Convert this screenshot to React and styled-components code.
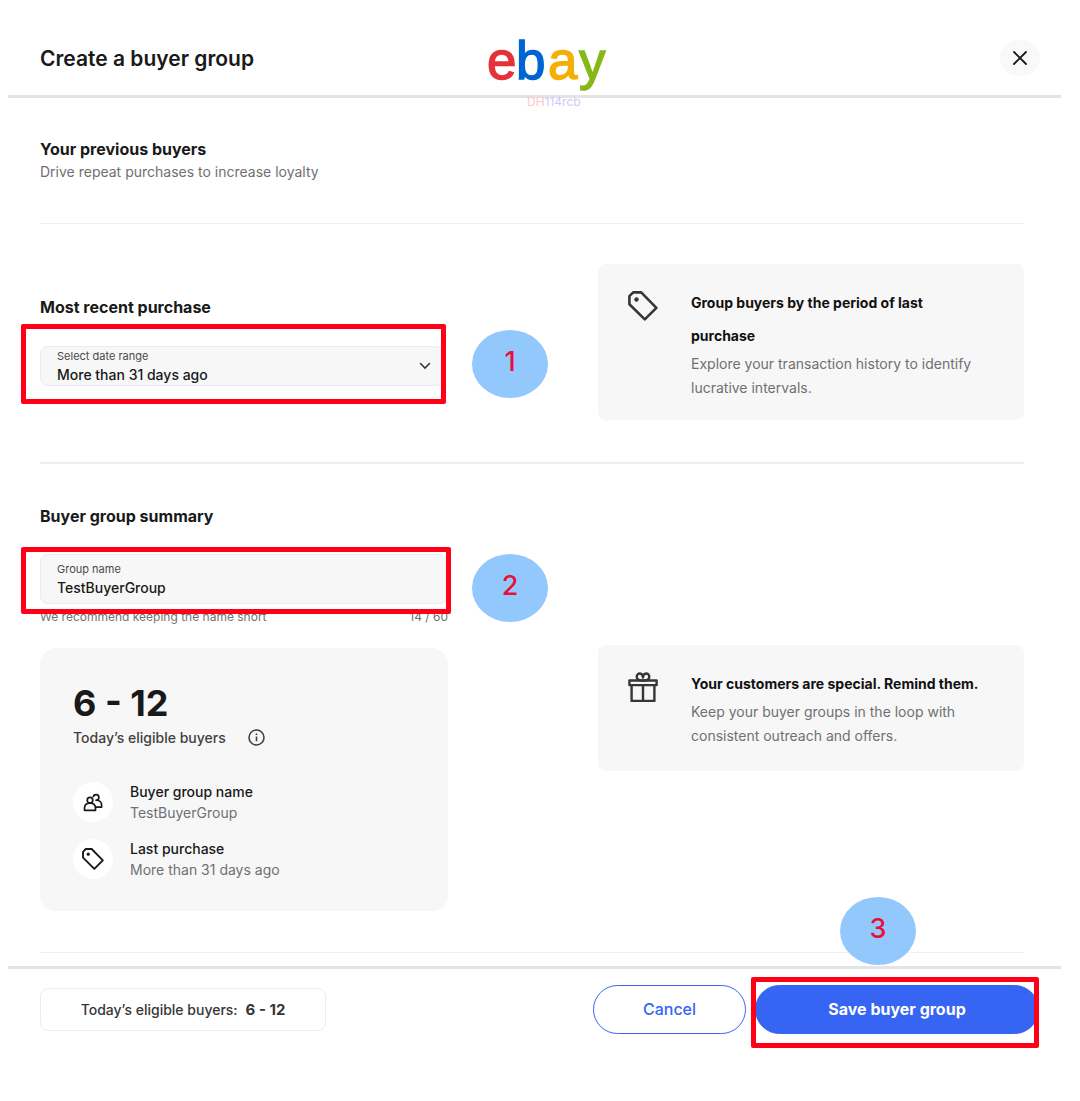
import React from "react";
import styled, { createGlobalStyle } from "styled-components";

const ink = "#191919";
const muted = "#707070";
const surface = "#f7f7f7";
const red = "#ff0018";
const blue = "#3665f3";

const GlobalStyle = createGlobalStyle`
  *, *::before, *::after { box-sizing: border-box; }
  body {
    margin: 0;
    background: #fff;
    color: ${ink};
    font-family: Inter, "Liberation Sans", sans-serif;
    font-size: 14px;
    line-height: 21px;
  }
  h1, h2, h3, p, dl, dt, dd { margin: 0; }
  button, input, select { font: inherit; }
`;

const Page = styled.div`
  padding: 20px 19px 40px 8px;
`;

const Header = styled.header`
  display: grid;
  grid-template-columns: 1fr auto 1fr;
  align-items: center;
  height: 78px;
  padding: 0 21px 0 32px;
  border-bottom: 3px solid #e3e3e3;
`;

const Title = styled.h1`
  padding-top: 2px;
  font-size: 21px;
  line-height: 28px;
  font-weight: 600;
`;

const Brand = styled.div`
  position: relative;
  display: flex;
  margin-left: 16px;
`;

const Tag = styled.span`
  position: absolute;
  top: 71px;
  left: 41px;
  font-size: 12px;
  line-height: 12px;
  color: #cfc9fa;
`;

const TagLead = styled.span`
  color: #ffc6cd;
`;

const CloseButton = styled.button`
  display: grid;
  place-items: center;
  justify-self: end;
  width: 40px;
  height: 36px;
  padding: 0;
  border: 0;
  border-radius: 18px;
  background: #f9f9f9;
  color: ${ink};
`;

const Content = styled.main`
  padding: 0 37px 0 32px;
`;

const Section = styled.section`
  padding: ${(p) => p.$pad};
  border-bottom: ${(p) => p.$line || 1}px solid #efefef;
`;

const Columns = styled.div`
  display: grid;
  grid-template-columns: 408fr 426fr;
  column-gap: 150px;
  align-items: start;
`;

const Column = styled.div`
  padding-top: ${(p) => p.$top || 0}px;
`;

const Heading = styled.h2`
  font-size: 16px;
  line-height: 24px;
  font-weight: 700;
`;

const Muted = styled.p`
  color: ${muted};
`;

const Marked = styled.div`
  position: relative;
  margin-top: ${(p) => p.$top || 0}px;
`;

const Outline = styled.div`
  position: absolute;
  inset: ${(p) => p.$inset};
  border: 5px solid ${red};
  border-radius: 2px;
  pointer-events: none;
`;

const Step = styled.span`
  position: absolute;
  top: ${(p) => p.$top}px;
  left: ${(p) => p.$left};
  display: grid;
  place-items: center;
  width: 76px;
  height: 68px;
  padding-bottom: 4px;
  border-radius: 50%;
  background: #93c8fd;
  color: #e8103a;
  font-size: 27px;
  line-height: 32px;
  font-weight: 500;
`;

const Field = styled.div`
  position: relative;
  display: flex;
  flex-direction: column;
  justify-content: center;
  height: ${(p) => p.$height}px;
  margin-right: ${(p) => p.$end || 0}px;
  padding: 0 16px;
  border: 1px solid #ececec;
  border-radius: 8px;
  background: ${surface};
`;

const FieldLabel = styled.label`
  font-size: 11px;
  line-height: 16px;
  color: #4a4a4a;
`;

const Select = styled.select`
  appearance: none;
  width: 100%;
  height: 20px;
  padding: 0;
  border: 0;
  background: transparent;
  color: ${ink};
  font-weight: 500;
`;

const TextInput = styled.input`
  width: 100%;
  height: 20px;
  padding: 0;
  border: 0;
  background: transparent;
  color: ${ink};
  font-weight: 500;
`;

const Chevron = styled.svg`
  position: absolute;
  top: 15px;
  right: 12px;
  pointer-events: none;
`;

const Hint = styled.p`
  display: flex;
  justify-content: space-between;
  padding-top: 5px;
  font-size: 12px;
  line-height: 16px;
  color: ${muted};
`;

const Tip = styled.aside`
  display: flex;
  gap: 33px;
  min-height: ${(p) => p.$height}px;
  padding: 22px 37px 16px 30px;
  border-radius: 8px;
  background: ${surface};
  color: #363636;

  svg {
    flex: none;
    margin-top: 5px;
  }
`;

const TipTitle = styled.h3`
  font-size: 14px;
  line-height: 33px;
  font-weight: 700;
  color: #111;
`;

const TipText = styled.p`
  line-height: 24px;
  color: ${muted};
`;

const Summary = styled.div`
  margin-top: 23px;
  padding: 33px 33px 31px;
  border-radius: 16px;
  background: ${surface};
`;

const Count = styled.p`
  font-size: 36px;
  line-height: 44px;
  font-weight: 700;
`;

const Eligible = styled.p`
  display: flex;
  align-items: center;
  gap: 22px;
  margin-top: 2px;
  color: #414141;
  font-weight: 500;
`;

const Facts = styled.dl`
  display: grid;
  gap: 15px;
  margin-top: 33px;
`;

const Fact = styled.div`
  display: grid;
  grid-template-columns: 40px 1fr;
  align-items: center;
  column-gap: 17px;
`;

const Badge = styled.span`
  display: grid;
  place-items: center;
  grid-row: span 2;
  width: 40px;
  height: 40px;
  border-radius: 50%;
  background: #fff;
`;

const FactName = styled.dt`
  font-weight: 500;
`;

const FactValue = styled.dd`
  color: ${muted};
`;

const Footer = styled.footer`
  display: flex;
  align-items: center;
  gap: 9px;
  margin-top: 13px;
  padding: 16px 22px 16px 32px;
  border-top: 3px solid #e3e3e3;
`;

const Pill = styled.div`
  display: flex;
  justify-content: center;
  gap: 8px;
  width: 286px;
  margin-right: auto;
  padding: 10px 0;
  border: 1px solid #ececec;
  border-radius: 8px;
  color: #363636;
  font-weight: 500;
`;

const Total = styled.strong`
  font-size: 15px;
  font-weight: 700;
`;

const Button = styled.button`
  width: ${(p) => (p.$primary ? 284 : 153)}px;
  height: 49px;
  border: 1px solid ${blue};
  border-radius: 25px;
  background: ${(p) => (p.$primary ? blue : "#fff")};
  color: ${(p) => (p.$primary ? "#fff" : blue)};
  font-size: 16px;
  font-weight: ${(p) => (p.$primary ? 700 : 500)};
`;

function Logo() {
  return (
    <svg width="124" height="66" viewBox="0 0 124 66" role="img" aria-label="ebay"
      fontFamily="Liberation Sans, sans-serif" fontSize="53" strokeWidth="1.400">
      <text x="1" y="54" fill="#e53238" stroke="#e53238">e</text>
      <text x="30" y="54" fill="#0064d2" stroke="#0064d2">b</text>
      <text x="62" y="54" fill="#f5af02" stroke="#f5af02">a</text>
      <text x="93" y="54" fill="#86b817" stroke="#86b817">y</text>
    </svg>
  );
}

function TagIcon({ size }) {
  return (
    <svg width={size} height={size} viewBox="0 0 30 30" fill="none" stroke="currentColor" strokeWidth="2.6" aria-hidden="true">
      <path d="M1.400 5.200 5.200 1.400h8L28.400 16.800 16.800 28.400 1.400 13.200z" strokeLinejoin="round" />
      <circle cx="8.500" cy="8.500" r="2.200" fill="currentColor" stroke="none" />
    </svg>
  );
}

function GiftIcon() {
  return (
    <svg width="30" height="32" viewBox="0 0 30 32" fill="none" stroke="currentColor" strokeWidth="2.4" strokeLinejoin="round" aria-hidden="true">
      <path d="M1.400 8.500h27.200v4.600H1.400zM3.600 13.100v15.800h22.800V13.100M15 13.100v15.800" />
      <path d="M15 8.500C11 8.500 8.700 7.300 8.700 4.700 8.700.5 15 .2 15 5.500c0-5.300 6.300-5 6.300-.8C21.300 7.300 19 8.500 15 8.500z" />
    </svg>
  );
}

function PeopleIcon() {
  return (
    <svg width="20" height="20" viewBox="0 0 20 20" fill="none" stroke="currentColor" strokeWidth="1.700" strokeLinejoin="round" aria-hidden="true">
      <circle cx="7" cy="8.200" r="2.800" />
      <path d="M1.500 18.300v-2c0-3 2-5.200 5.500-5.200s5.500 2.200 5.500 5.200v2z" />
      <path d="M10.300 5.200a2.800 2.800 0 1 1 2.800 3c3.500 0 5.500 2.200 5.500 4.600v2.400h-6" />
    </svg>
  );
}

function InfoIcon() {
  return (
    <svg width="17" height="17" viewBox="0 0 17 17" fill="none" stroke="currentColor" strokeWidth="1.600" role="img" aria-label="More information">
      <circle cx="8.500" cy="8.500" r="7.500" />
      <path d="M8.500 7.500v4.700M8.500 4.600v1.500" />
    </svg>
  );
}

export default function App() {
  return (
    <>
      <GlobalStyle />
      <Page>
        <Header>
          <Title>Create a buyer group</Title>
          <Brand>
            <Logo />
            <Tag><TagLead>DH</TagLead>114rcb</Tag>
          </Brand>
          <CloseButton type="button" aria-label="Close">
            <svg width="14" height="14" viewBox="0 0 14 14" stroke="currentColor" strokeWidth="1.800" strokeLinecap="round" aria-hidden="true">
              <path d="m1 1 12 12M13 1 1 13" />
            </svg>
          </CloseButton>
        </Header>

        <Content>
          <Section $pad="39px 0 41px">
            <Heading>Your previous buyers</Heading>
            <Muted>Drive repeat purchases to increase loyalty</Muted>
          </Section>

          <Section $pad="40px 0 42px" $line={2}>
            <Columns>
              <Column $top={31}>
                <Heading>Most recent purchase</Heading>
                <Marked $top={27}>
                  <Field $height={40} $end={4}>
                    <FieldLabel htmlFor="range">Select date range</FieldLabel>
                    <Select id="range" defaultValue="31">
                      <option value="31">More than 31 days ago</option>
                    </Select>
                    <Chevron width="12" height="8" viewBox="0 0 12 8" fill="none" stroke="#363636" strokeWidth="1.600" strokeLinecap="round" aria-hidden="true">
                      <path d="m1.500 1.500 4.500 4.500 4.500-4.500" />
                    </Chevron>
                  </Field>
                  <Outline $inset="-22px 2px -18px -19px" />
                  <Step $top={-16} $left="calc(100% + 24px)">1</Step>
                </Marked>
              </Column>
              <Tip $height={156}>
                <TagIcon size={30} />
                <div>
                  <TipTitle>Group buyers by the period of last purchase</TipTitle>
                  <TipText>Explore your transaction history to identify lucrative intervals.</TipText>
                </div>
              </Tip>
            </Columns>
          </Section>

          <Section $pad="40px 0 41px">
            <Heading>Buyer group summary</Heading>
            <Columns>
              <Column>
                <Marked $top={26}>
                  <Field $height={50}>
                    <FieldLabel htmlFor="name">Group name</FieldLabel>
                    <TextInput id="name" defaultValue="TestBuyerGroup" />
                  </Field>
                  <Hint>
                    <span>We recommend keeping the name short</span>
                    <span>14 / 60</span>
                  </Hint>
                  <Outline $inset="-7px -3px 11px -19px" />
                  <Step $top={0} $left="calc(100% + 24px)">2</Step>
                </Marked>
                <Summary>
                  <Count>6 - 12</Count>
                  <Eligible>Today’s eligible buyers <InfoIcon /></Eligible>
                  <Facts>
                    <Fact>
                      <Badge><PeopleIcon /></Badge>
                      <FactName>Buyer group name</FactName>
                      <FactValue>TestBuyerGroup</FactValue>
                    </Fact>
                    <Fact>
                      <Badge><TagIcon size={22} /></Badge>
                      <FactName>Last purchase</FactName>
                      <FactValue>More than 31 days ago</FactValue>
                    </Fact>
                  </Facts>
                </Summary>
              </Column>
              <Column $top={117}>
                <Tip $height={126}>
                  <GiftIcon />
                  <div>
                    <TipTitle>Your customers are special. Remind them.</TipTitle>
                    <TipText>Keep your buyer groups in the loop with consistent outreach and offers.</TipText>
                  </div>
                </Tip>
              </Column>
            </Columns>
          </Section>
        </Content>

        <Footer>
          <Pill>Today’s eligible buyers: <Total>6 - 12</Total></Pill>
          <Button type="button">Cancel</Button>
          <Marked>
            <Button type="button" $primary>Save buyer group</Button>
            <Outline $inset="-8px 0 -14px -4px" />
            <Step $top={-88} $left="85px">3</Step>
          </Marked>
        </Footer>
      </Page>
    </>
  );
}
